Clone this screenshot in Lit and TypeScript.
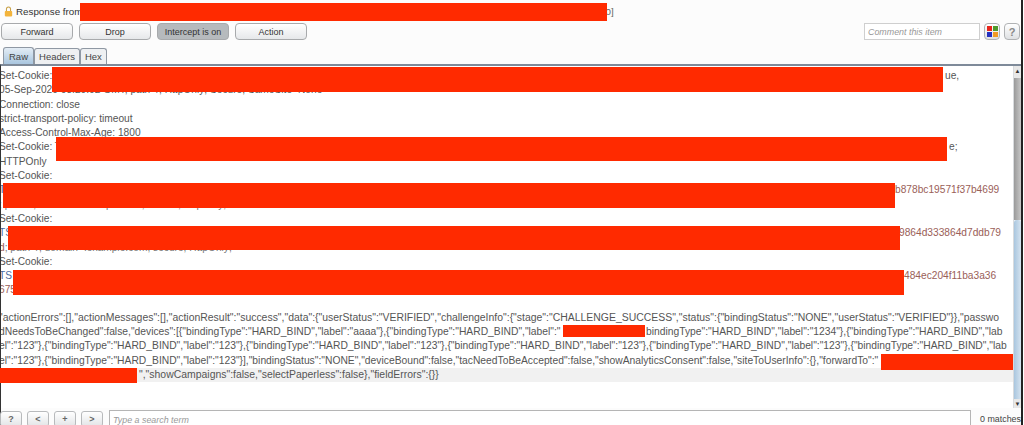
import { LitElement, html, css } from "lit";
import { customElement } from "lit/decorators.js";

const redactions: [number, number, number, number][] = [
  [80, 3, 527, 18],
  [52, 67, 891, 25],
  [56, 137, 891, 24],
  [3, 183, 892, 25],
  [8, 226, 892, 24],
  [13, 270, 891, 25],
  [563, 325, 82, 12],
  [881, 354, 132, 16],
  [0, 368, 137, 15],
];

@customElement("app-root")
export class AppRoot extends LitElement {
  static styles = css`
    :host { display: block; width: 1024px; height: 425px; position: relative; overflow: hidden; background: #fff; font-family: "Liberation Sans", Arial, sans-serif; color: #444; }
    .frame { height: 425px; width: 1023px; display: flex; flex-direction: column; border-right: 2px solid #222; box-sizing: border-box; background: #fcfcfc; }
    .title { height: 23px; flex: none; display: flex; align-items: center; gap: 3px; padding-left: 4px; font-size: 9.8px; color: #333; }
    .lock { width: 9px; height: 11px; flex: none; }
    .title-end { margin-left: 520px; color: #666; }
    .toolbar { height: 24px; flex: none; box-sizing: border-box; display: flex; align-items: flex-start; gap: 6px; padding: 0 1px 0 1px; }
    .btn { width: 72px; height: 17px; box-sizing: border-box; border: 1px solid #a8aaac; border-radius: 4px; background: linear-gradient(#fff, #e6e8ea); font-size: 9px; display: flex; align-items: center; justify-content: center; color: #333; }
    .btn.on { background: #b6babd; }
    .spacer { flex: 1; }
    .tools { display: flex; gap: 4px; }
    .comment { width: 116px; height: 17px; box-sizing: border-box; border: 1px solid #cfcfcf; background: #fff; font-size: 8.9px; font-style: italic; color: #999; display: flex; align-items: center; padding-left: 3px; }
    .icon-btn { width: 16px; height: 17px; box-sizing: border-box; border: 1px solid #b0b2b4; border-radius: 4px; background: linear-gradient(#fff, #dfe1e3); display: flex; align-items: center; justify-content: center; font-size: 11px; font-weight: bold; color: #888; }
    .colors { display: grid; grid-template-columns: 5px 5px; gap: 1px; }
    .colors i { width: 5px; height: 5px; display: block; }
    .c1 { background: #e8261c; } .c2 { background: #4f9a2c; } .c3 { background: #2430c0; } .c4 { background: #f09a24; }
    .tabs { height: 17px; flex: none; display: flex; padding-left: 3px; align-items: flex-end; }
    .tab { height: 15px; border: 1px solid #8f98a3; border-bottom: none; border-radius: 3px 3px 0 0; padding: 0 4px; font-size: 9.5px; display: flex; align-items: center; background: #eef0f2; color: #444; }
    .tab.active { height: 16px; padding: 0 5px; background: linear-gradient(#e4edf5, #a9c6df); }
    .editor { height: 344px; flex: none; box-sizing: border-box; display: flex; border-top: 2px solid #7e8a99; border-left: 1px solid #333; background: #fff; }
    .text { flex: 1; min-width: 0; padding-top: 3px; overflow: hidden; font-size: 10.2px; line-height: 14.3px; color: #555; white-space: nowrap; }
    .text > div { height: 14.3px; margin-left: -2px; }
    .seg { display: inline-block; overflow: hidden; vertical-align: top; }
    .w-ue { width: 946px; }
    .w-e { width: 950px; }
    .w-b { width: 896px; }
    .w-9 { width: 900px; }
    .w-4 { width: 905px; }
    .w-label { width: 647px; }
    .w-camp { width: 140px; }
    .blue { color: #4a6a9f; }
    .brown { color: #9a6058; }
    .frag { color: #777; }
    .text > .json { font-size: 10.3px; }
    .text > .wide { font-size: 10.45px; }
    .text > .hl { background: #f1f1f1; }
    .text > .gap { height: 13px; }
    .scroll { width: 7px; flex: none; display: flex; flex-direction: column; background: #eef1f4; border-left: 1px solid #d8dbde; }
    .arrow { font-size: 6px; line-height: 10px; text-align: center; color: #333; background: #e8e8e8; overflow: hidden; }
    .arrow.up { height: 12px; }
    .arrow.down { height: 9px; }
    .thumb-a { height: 142px; background: linear-gradient(90deg, #9a9a9a, #c7c7c7); }
    .thumb-b { flex: 1; border-radius: 3px 3px 0 0; background: linear-gradient(90deg, #a9c6df, #d5e3ef); }
    .search { flex: 1; min-height: 0; display: flex; align-items: flex-start; gap: 5px; font-size: 8.9px; border-left: 1px solid #333; }
    .nav { width: 22px; height: 16px; margin-top: 3px; box-sizing: border-box; border: 1px solid #b8babc; border-radius: 3px; background: linear-gradient(#fff, #e3e5e7); display: flex; align-items: center; justify-content: center; font-size: 9px; font-weight: bold; color: #666; }
    .nav.first { margin-left: -1px; }
    .find { flex: 1; height: 20px; margin-top: 2px; margin-left: 1px; box-sizing: border-box; border: 1px solid #b5b5b5; background: #fff; font-style: italic; color: #999; display: flex; align-items: center; padding-left: 3px; }
    .matches { width: 42px; margin-top: 6px; margin-left: 3px; text-align: right; color: #444; white-space: nowrap; }
    .redact { position: absolute; background: #ff2a00; }
  `;

  render() {
    return html`
      <div class="frame">
        <div class="title">
          <svg class="lock" viewBox="0 0 11 13"><path d="M3 6V3.5a2.5 2.5 0 0 1 5 0V6" fill="none" stroke="#c9a24a" stroke-width="1.3"/><rect x="1" y="6" width="9" height="6.5" rx="1" fill="#f3b43c"/></svg>
          <span>Response from</span>
          <span class="title-end">0]</span>
        </div>
        <div class="toolbar">
          <div class="btn">Forward</div><div class="btn">Drop</div><div class="btn on">Intercept is on</div><div class="btn">Action</div>
          <span class="spacer"></span>
          <div class="tools">
            <div class="comment">Comment this item</div>
            <div class="icon-btn"><div class="colors"><i class="c1"></i><i class="c2"></i><i class="c3"></i><i class="c4"></i></div></div>
            <div class="icon-btn">?</div>
          </div>
        </div>
        <div class="tabs"><div class="tab active">Raw</div><div class="tab">Headers</div><div class="tab">Hex</div></div>
        <div class="editor">
          <div class="text">
            <div><span class="seg w-ue">Set-Cookie:</span>ue,</div>
            <div>05-Sep-2020 08:20:02 GMT; path=/; HttpOnly; Secure; SameSite=None</div>
            <div>Connection: close</div>
            <div>strict-transport-policy: timeout</div>
            <div>Access-Control-Max-Age: 1800</div>
            <div><span class="seg w-e">Set-Cookie: T</span>e;</div>
            <div>HTTPOnly</div>
            <div>Set-Cookie:</div>
            <div><span class="seg w-b blue">TS</span><span class="brown">b878bc19571f37b4699</span></div>
            <div class="frag">; path=/; domain=.example.com; secure; HttpOnly;</div>
            <div>Set-Cookie:</div>
            <div><span class="seg w-9 blue">TS</span><span class="brown">9864d333864d7ddb79</span></div>
            <div class="frag"><span class="brown">d</span>; path=/; domain=.example.com; secure; HttpOnly;</div>
            <div>Set-Cookie:</div>
            <div><span class="seg w-4 blue">TS</span><span class="brown">484ec204f11ba3a36</span></div>
            <div class="brown">675</div>
            <div class="gap"></div>
            <div class="json wide">"actionErrors":[],"actionMessages":[],"actionResult":"success","data":{"userStatus":"VERIFIED","challengeInfo":{"stage":"CHALLENGE_SUCCESS","status":{"bindingStatus":"NONE","userStatus":"VERIFIED"}},"passwo</div>
            <div class="json"><span class="seg w-label">dNeedsToBeChanged":false,"devices":[{"bindingType":"HARD_BIND","label":"aaaa"},{"bindingType":"HARD_BIND","label":"</span>bindingType":"HARD_BIND","label":"1234"},{"bindingType":"HARD_BIND","lab</div>
            <div class="json">el":"123"},{"bindingType":"HARD_BIND","label":"123"},{"bindingType":"HARD_BIND","label":"123"},{"bindingType":"HARD_BIND","label":"123"},{"bindingType":"HARD_BIND","label":"123"},{"bindingType":"HARD_BIND","lab</div>
            <div class="json">el":"123"},{"bindingType":"HARD_BIND","label":"123"}],"bindingStatus":"NONE","deviceBound":false,"tacNeedToBeAccepted":false,"showAnalyticsConsent":false,"siteToUserInfo":{},"forwardTo":"</div>
            <div class="json wide hl"><span class="seg w-camp"></span>","showCampaigns":false,"selectPaperless":false},"fieldErrors":{}}</div>
          </div>
          <div class="scroll"><div class="arrow up">▲</div><div class="thumb-a"></div><div class="thumb-b"></div><div class="arrow down">▼</div></div>
        </div>
        <div class="search">
          <div class="nav first">?</div><div class="nav">&lt;</div><div class="nav">+</div><div class="nav">&gt;</div>
          <div class="find">Type a search term</div>
          <div class="matches">0 matches</div>
        </div>
      </div>
      ${redactions.map(([x, y, w, h]) => html`<div class="redact" style="left:${x}px;top:${y}px;width:${w}px;height:${h}px"></div>`)}
    `;
  }
}
